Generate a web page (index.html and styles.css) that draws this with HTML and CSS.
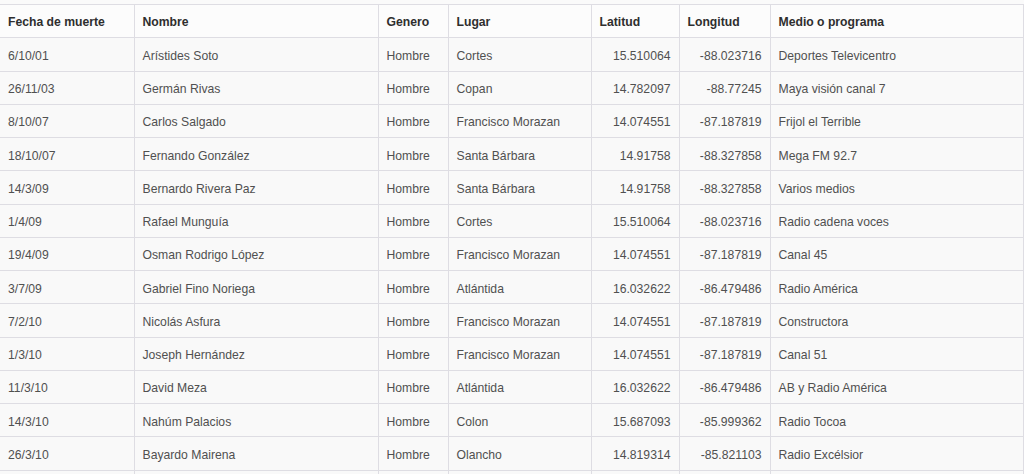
FILE: index.html
```html
<!DOCTYPE html>
<html lang="es">
<head>
<meta charset="utf-8">
<title>Periodistas</title>
<link rel="stylesheet" href="styles.css">
</head>
<body>
<table class="data">
  <colgroup>
    <col class="c1"><col class="c2"><col class="c3"><col class="c4"><col class="c5"><col class="c6"><col class="c7">
  </colgroup>
  <thead>
    <tr><th>Fecha de muerte</th><th>Nombre</th><th>Genero</th><th>Lugar</th><th>Latitud</th><th>Longitud</th><th>Medio o programa</th></tr>
  </thead>
  <tbody>
    <tr><td>6/10/01</td><td>Arístides Soto</td><td>Hombre</td><td>Cortes</td><td class="num">15.510064</td><td class="num">-88.023716</td><td>Deportes Televicentro</td></tr>
    <tr><td>26/11/03</td><td>Germán Rivas</td><td>Hombre</td><td>Copan</td><td class="num">14.782097</td><td class="num">-88.77245</td><td>Maya visión canal 7</td></tr>
    <tr><td>8/10/07</td><td>Carlos Salgado</td><td>Hombre</td><td>Francisco Morazan</td><td class="num">14.074551</td><td class="num">-87.187819</td><td>Frijol el Terrible</td></tr>
    <tr><td>18/10/07</td><td>Fernando González</td><td>Hombre</td><td>Santa Bárbara</td><td class="num">14.91758</td><td class="num">-88.327858</td><td>Mega FM 92.7</td></tr>
    <tr><td>14/3/09</td><td>Bernardo Rivera Paz</td><td>Hombre</td><td>Santa Bárbara</td><td class="num">14.91758</td><td class="num">-88.327858</td><td>Varios medios</td></tr>
    <tr><td>1/4/09</td><td>Rafael Munguía</td><td>Hombre</td><td>Cortes</td><td class="num">15.510064</td><td class="num">-88.023716</td><td>Radio cadena voces</td></tr>
    <tr><td>19/4/09</td><td>Osman Rodrigo López</td><td>Hombre</td><td>Francisco Morazan</td><td class="num">14.074551</td><td class="num">-87.187819</td><td>Canal 45</td></tr>
    <tr><td>3/7/09</td><td>Gabriel Fino Noriega</td><td>Hombre</td><td>Atlántida</td><td class="num">16.032622</td><td class="num">-86.479486</td><td>Radio América</td></tr>
    <tr><td>7/2/10</td><td>Nicolás Asfura</td><td>Hombre</td><td>Francisco Morazan</td><td class="num">14.074551</td><td class="num">-87.187819</td><td>Constructora</td></tr>
    <tr><td>1/3/10</td><td>Joseph Hernández</td><td>Hombre</td><td>Francisco Morazan</td><td class="num">14.074551</td><td class="num">-87.187819</td><td>Canal 51</td></tr>
    <tr><td>11/3/10</td><td>David Meza</td><td>Hombre</td><td>Atlántida</td><td class="num">16.032622</td><td class="num">-86.479486</td><td>AB y Radio América</td></tr>
    <tr><td>14/3/10</td><td>Nahúm Palacios</td><td>Hombre</td><td>Colon</td><td class="num">15.687093</td><td class="num">-85.999362</td><td>Radio Tocoa</td></tr>
    <tr><td>26/3/10</td><td>Bayardo Mairena</td><td>Hombre</td><td>Olancho</td><td class="num">14.819314</td><td class="num">-85.821103</td><td>Radio Excélsior</td></tr>
    <tr><td>&nbsp;</td><td>&nbsp;</td><td>&nbsp;</td><td>&nbsp;</td><td>&nbsp;</td><td>&nbsp;</td><td>&nbsp;</td></tr>
  </tbody>
</table>
</body>
</html>
```

FILE: styles.css
```css
html, body {
  margin: 0;
  padding: 0;
  background: #fafafa;
  overflow: hidden;
}

body {
  padding-top: 4px;
  font-family: "Liberation Sans", Arial, sans-serif;
  font-size: 12.2px;
  color: #505050;
}

.data {
  border-collapse: collapse;
  table-layout: fixed;
  width: 1023px;
  border-top: 1px solid #dedde3;
}

.c1 { width: 134px; }
.c2 { width: 244px; }
.c3 { width: 70px; }
.c4 { width: 143px; }
.c5 { width: 88px; }
.c6 { width: 91px; }
.c7 { width: 253px; }

.data th,
.data td {
  height: 16.27px;
  line-height: 16.27px;
  border-top: 1px solid #dedde3;
  border-left: 1px solid #dedde3;
  text-align: left;
  white-space: nowrap;
  overflow: hidden;
}

.data th {
  padding: 9px 8px 7px;
  font-weight: bold;
  color: #2e2e2e;
  background: #fcfcfc;
}

.data td {
  padding: 9.5px 8px 6.5px;
  background: #f9f9f9;
}

.data th:first-child,
.data td:first-child {
  border-left: none;
}

.data th:last-child,
.data td:last-child {
  border-right: 1px solid #dedde3;
}

.data td.num {
  text-align: right;
}
```
